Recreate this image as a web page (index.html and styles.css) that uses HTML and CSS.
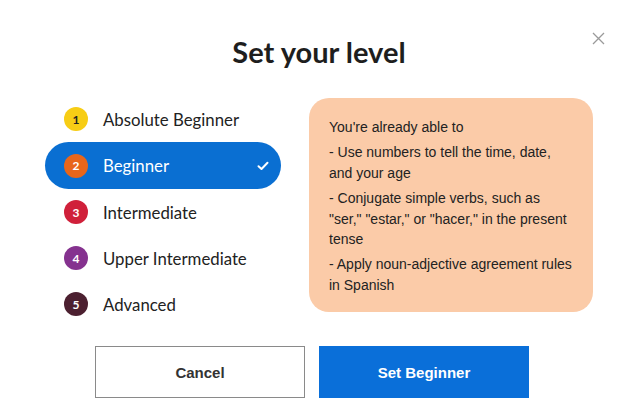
FILE: index.html
```html
<!DOCTYPE html>
<html lang="en">
<head>
    <meta charset="UTF-8">
    <meta name="viewport" content="width=device-width, initial-scale=1.0">
    <title>Set your level</title>
    <link rel="stylesheet" href="styles.css">
</head>
<body>
    <div class="modal">
        <button class="close" aria-label="Close">
            <svg width="13" height="13" viewBox="0 0 13 13"><path d="M1 1L12 12M12 1L1 12" stroke="#9a9a9a" stroke-width="1.3" fill="none"/></svg>
        </button>
        <h1>Set your level</h1>

        <div class="content">
            <ul class="levels">
                <li class="level"><span class="num n1">1</span>Absolute Beginner</li>
                <li class="level active"><span class="num n2">2</span>Beginner
                    <svg class="check" width="12" height="10" viewBox="0 0 12 10"><path d="M1.5 5.2L4.5 8L10.5 1.8" stroke="#fff" stroke-width="2" fill="none" stroke-linecap="round" stroke-linejoin="round"/></svg>
                </li>
                <li class="level"><span class="num n3">3</span>Intermediate</li>
                <li class="level"><span class="num n4">4</span>Upper Intermediate</li>
                <li class="level"><span class="num n5">5</span>Advanced</li>
            </ul>

            <div class="info">
                <p>You're already able to</p>
                <p>- Use numbers to tell the time, date, and your age</p>
                <p>- Conjugate simple verbs, such as "ser," "estar," or "hacer," in the present tense</p>
                <p>- Apply noun-adjective agreement rules in Spanish</p>
            </div>
        </div>

        <div class="actions">
            <button class="btn cancel">Cancel</button>
            <button class="btn primary">Set Beginner</button>
        </div>
    </div>
</body>
</html>
```

FILE: styles.css
```css
body {
    margin: 0;
    background: white;
    font-family: Lato, "Open Sans", sans-serif;
    color: #222;
}
.modal {
    position: relative;
    width: 638px;
    height: 414px;
    box-sizing: border-box;
    padding-top: 35px;
}
.close {
    position: absolute;
    top: 32px;
    right: 33px;
    background: none;
    border: none;
    padding: 0;
    cursor: pointer;
}
h1 {
    margin: 0;
    text-align: center;
    font-size: 29px;
    font-weight: 700;
    color: #1e1e1e;
    line-height: 34px;
}
.content {
    display: flex;
    margin-top: 27px;
    padding-left: 45px;
    gap: 28px;
}
.levels {
    list-style: none;
    margin: 0;
    padding: 0;
    width: 236px;
}
.level {
    display: flex;
    align-items: center;
    height: 46px;
    padding-left: 19px;
    font-size: 16.8px;
    color: #222;
}
.level.active {
    background: #0a6fd2;
    color: white;
    border-radius: 24px;
    height: 47px;
}
.num {
    display: inline-flex;
    justify-content: center;
    align-items: center;
    width: 24px;
    height: 24px;
    border-radius: 50%;
    margin-right: 15px;
    font-size: 12px;
    font-weight: 700;
    color: white;
}
.n1 { background: #f7cd15; color: #222; }
.n2 { background: #e8661b; }
.n3 { background: #d0203a; }
.n4 { background: #85328f; }
.n5 { background: #4c2030; }
.check {
    margin-left: auto;
    margin-right: 12px;
}
.info {
    width: 284px;
    height: 214px;
    box-sizing: border-box;
    background: #fbcba8;
    border-radius: 20px;
    padding: 19px 20px;
    font-family: "Liberation Sans", Arial, sans-serif;
    font-size: 14px;
    line-height: 20.4px;
    color: #222;
    margin-top: 2px;
}
.info p {
    margin: 0 0 5px;
}
.actions {
    display: flex;
    justify-content: center;
    gap: 14px;
    margin-top: 19px;
    padding-right: 14px;
}
.btn {
    width: 210px;
    height: 52px;
    font-family: "Liberation Sans", Arial, sans-serif;
    font-size: 15px;
    font-weight: 700;
    cursor: pointer;
}
.cancel {
    background: white;
    border: 1px solid #8a8a8a;
    color: #333;
}
.primary {
    background: #0a6fd9;
    border: none;
    color: white;
}
```
